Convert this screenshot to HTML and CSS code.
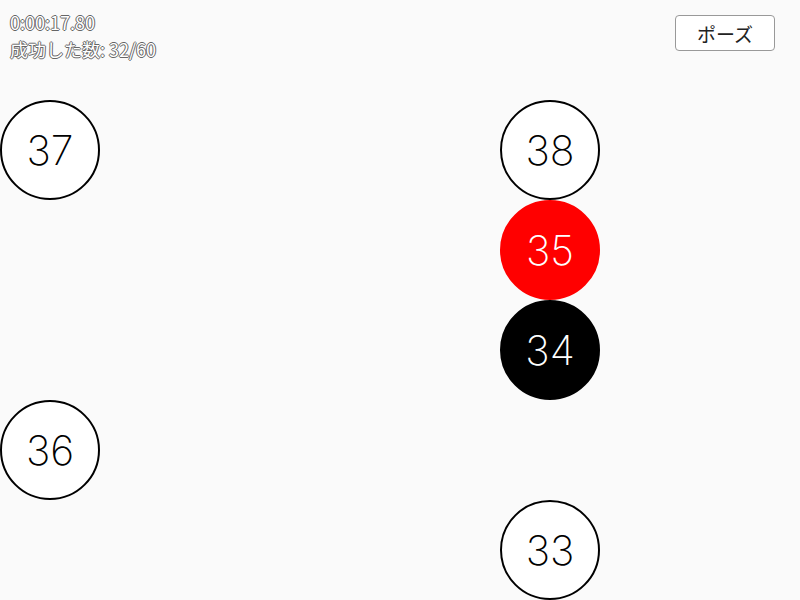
FILE: index.html
```html
<!DOCTYPE html>
<html lang="ja">
<head>
<meta charset="utf-8">
<link rel="stylesheet" href="styles.css">
</head>
<body>
<div class="game">
  <div class="hud">
    <div class="hud-line">0:00:17.80</div>
    <div class="hud-line">成功した数: 32/60</div>
  </div>
  <button class="pause">ポーズ</button>
  <div class="ball" style="left:0;top:100px">37</div>
  <div class="ball" style="left:500px;top:100px">38</div>
  <div class="ball ball-next" style="left:500px;top:200px">35</div>
  <div class="ball ball-done" style="left:500px;top:300px">34</div>
  <div class="ball" style="left:0;top:400px">36</div>
  <div class="ball" style="left:500px;top:500px">33</div>
</div>
</body>
</html>
```
FILE: styles.css
```css
html, body {
  margin: 0;
  padding: 0;
  background: #fafafa;
}
.game {
  position: relative;
  width: 800px;
  height: 600px;
  overflow: hidden;
  font-family: "Noto Sans CJK JP", "Noto Sans", sans-serif;
}
.hud {
  position: absolute;
  left: 10px;
  top: 9px;
  z-index: 2;
  color: #fff;
  font-size: 18px;
  line-height: 27px;
  text-shadow: 1px 0 0 #666, -1px 0 0 #666, 0 1px 0 #666, 0 -1px 0 #666;
}
.pause {
  position: absolute;
  right: 25px;
  top: 15px;
  width: 100px;
  height: 36px;
  box-sizing: border-box;
  background: #fff;
  border: 1px solid #999;
  border-radius: 4px;
  font-family: "Noto Sans CJK JP", sans-serif;
  font-size: 19px;
  color: #222;
  padding: 0;
  z-index: 2;
}
.ball {
  position: absolute;
  width: 100px;
  height: 100px;
  box-sizing: border-box;
  border: 2px solid #000;
  border-radius: 50%;
  background: #fff;
  display: flex;
  align-items: center;
  justify-content: center;
  font-family: "Inter", "Lato", sans-serif;
  font-size: 41px;
  font-weight: 250;
  color: #000;
}
.ball-next {
  background: #ff0000;
  border-color: #ff0000;
  color: #fff;
}
.ball-done {
  background: #000;
  color: #fff;
}
```
